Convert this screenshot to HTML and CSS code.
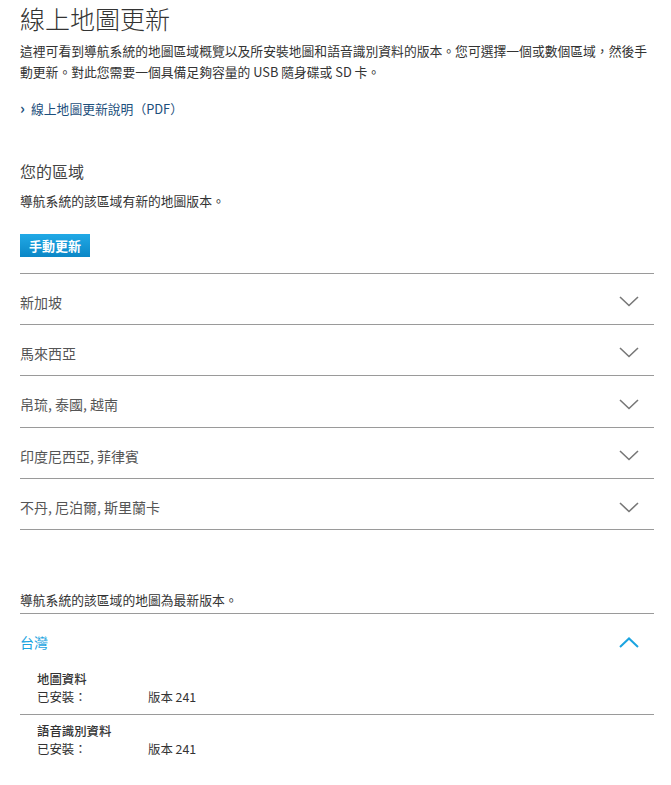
FILE: index.html
```html
<!DOCTYPE html>
<html lang="zh-Hant">
<head>
    <meta charset="UTF-8">
    <meta name="viewport" content="width=device-width, initial-scale=1.0">
    <title>線上地圖更新</title>
    <link rel="stylesheet" href="styles.css">
</head>
<body>
<div class="page">
    <h1>線上地圖更新</h1>
    <p class="intro">這裡可看到導航系統的地圖區域概覽以及所安裝地圖和語音識別資料的版本。您可選擇一個或數個區域，然後手動更新。對此您需要一個具備足夠容量的 USB 隨身碟或 SD 卡。</p>

    <a class="pdf-link" href="#"><span class="arrow">›</span>線上地圖更新說明（PDF）</a>

    <h2>您的區域</h2>
    <p class="note">導航系統的該區域有新的地圖版本。</p>
    <button class="btn-update" type="button">手動更新</button>

    <div class="region-list">
        <div class="region">
            <span>新加坡</span>
            <svg class="chev" width="20" height="11" viewBox="0 0 20 11"><polyline points="1,1 10,9.5 19,1"/></svg>
        </div>
        <div class="region">
            <span>馬來西亞</span>
            <svg class="chev" width="20" height="11" viewBox="0 0 20 11"><polyline points="1,1 10,9.5 19,1"/></svg>
        </div>
        <div class="region">
            <span>帛琉, 泰國, 越南</span>
            <svg class="chev" width="20" height="11" viewBox="0 0 20 11"><polyline points="1,1 10,9.5 19,1"/></svg>
        </div>
        <div class="region">
            <span>印度尼西亞, 菲律賓</span>
            <svg class="chev" width="20" height="11" viewBox="0 0 20 11"><polyline points="1,1 10,9.5 19,1"/></svg>
        </div>
        <div class="region">
            <span>不丹, 尼泊爾, 斯里蘭卡</span>
            <svg class="chev" width="20" height="11" viewBox="0 0 20 11"><polyline points="1,1 10,9.5 19,1"/></svg>
        </div>
    </div>

    <p class="note latest">導航系統的該區域的地圖為最新版本。</p>

    <div class="region-list open-list">
        <div class="region open">
            <span>台灣</span>
            <svg class="chev" width="20" height="11" viewBox="0 0 20 11"><polyline points="1,10 10,1.5 19,10"/></svg>
        </div>
        <div class="details">
            <div class="item">
                <div class="item-title">地圖資料</div>
                <div class="item-row"><span class="label">已安裝：</span><span>版本 241</span></div>
            </div>
            <div class="item">
                <div class="item-title">語音識別資料</div>
                <div class="item-row"><span class="label">已安裝：</span><span>版本 241</span></div>
            </div>
        </div>
    </div>
</div>
</body>
</html>
```

FILE: styles.css
```css
body {
    margin: 0;
    padding: 0;
    background-color: #fff;
    color: #333;
    font-family: "Noto Sans CJK TC", "Noto Sans", sans-serif;
}

.page {
    padding: 0 17px 0 20px;
}

h1 {
    margin: 0;
    font-size: 25px;
    font-weight: 300;
    line-height: 36.5px;
    color: #333;
}

.intro {
    margin: 3px 0 0;
    font-size: 12.8px;
    line-height: 21px;
    color: #333;
}

.pdf-link {
    display: block;
    margin-top: 15px;
    font-size: 12.8px;
    line-height: 21px;
    color: #1d4f7c;
    text-decoration: none;
}

.arrow {
    display: inline-block;
    width: 11px;
    font-weight: bold;
    font-size: 15px;
}

h2 {
    margin: 40px 0 0;
    font-size: 16px;
    font-weight: 400;
    line-height: 24px;
    color: #444;
}

.note {
    margin: 7px 0 0;
    font-size: 12.8px;
    line-height: 21px;
    color: #333;
}

.btn-update {
    display: block;
    margin-top: 23px;
    height: 23px;
    padding: 0 9px;
    border: none;
    border-radius: 0;
    background: linear-gradient(#21a9e6, #0b87c6);
    color: #fff;
    font-family: inherit;
    font-size: 13px;
    font-weight: bold;
    cursor: pointer;
}

.region-list {
    margin-top: 16px;
    border-bottom: 1px solid #9a9a9a;
}

.region {
    display: flex;
    justify-content: space-between;
    align-items: center;
    border-top: 1px solid #9a9a9a;
    padding: 18px 15px 12.4px 0;
    font-size: 14px;
    line-height: 20px;
    color: #555;
}

.chev polyline {
    fill: none;
    stroke: #777;
    stroke-width: 1.6;
}

.latest {
    margin-top: 59px;
}

.open-list {
    margin-top: 3px;
    border-bottom: none;
}

.region.open {
    color: #1ba4e0;
    padding-bottom: 10.4px;
}

.region.open .chev polyline {
    stroke: #1ba4e0;
    stroke-width: 2;
}

.item {
    padding: 7.6px 0 8px 17px;
    font-size: 12.4px;
    line-height: 18px;
    color: #333;
}

.item + .item {
    border-top: 1px solid #9a9a9a;
    padding-top: 7px;
}

.item-title {
    font-weight: 500;
}

.item-row {
    display: flex;
}

.label {
    width: 111px;
}
```
